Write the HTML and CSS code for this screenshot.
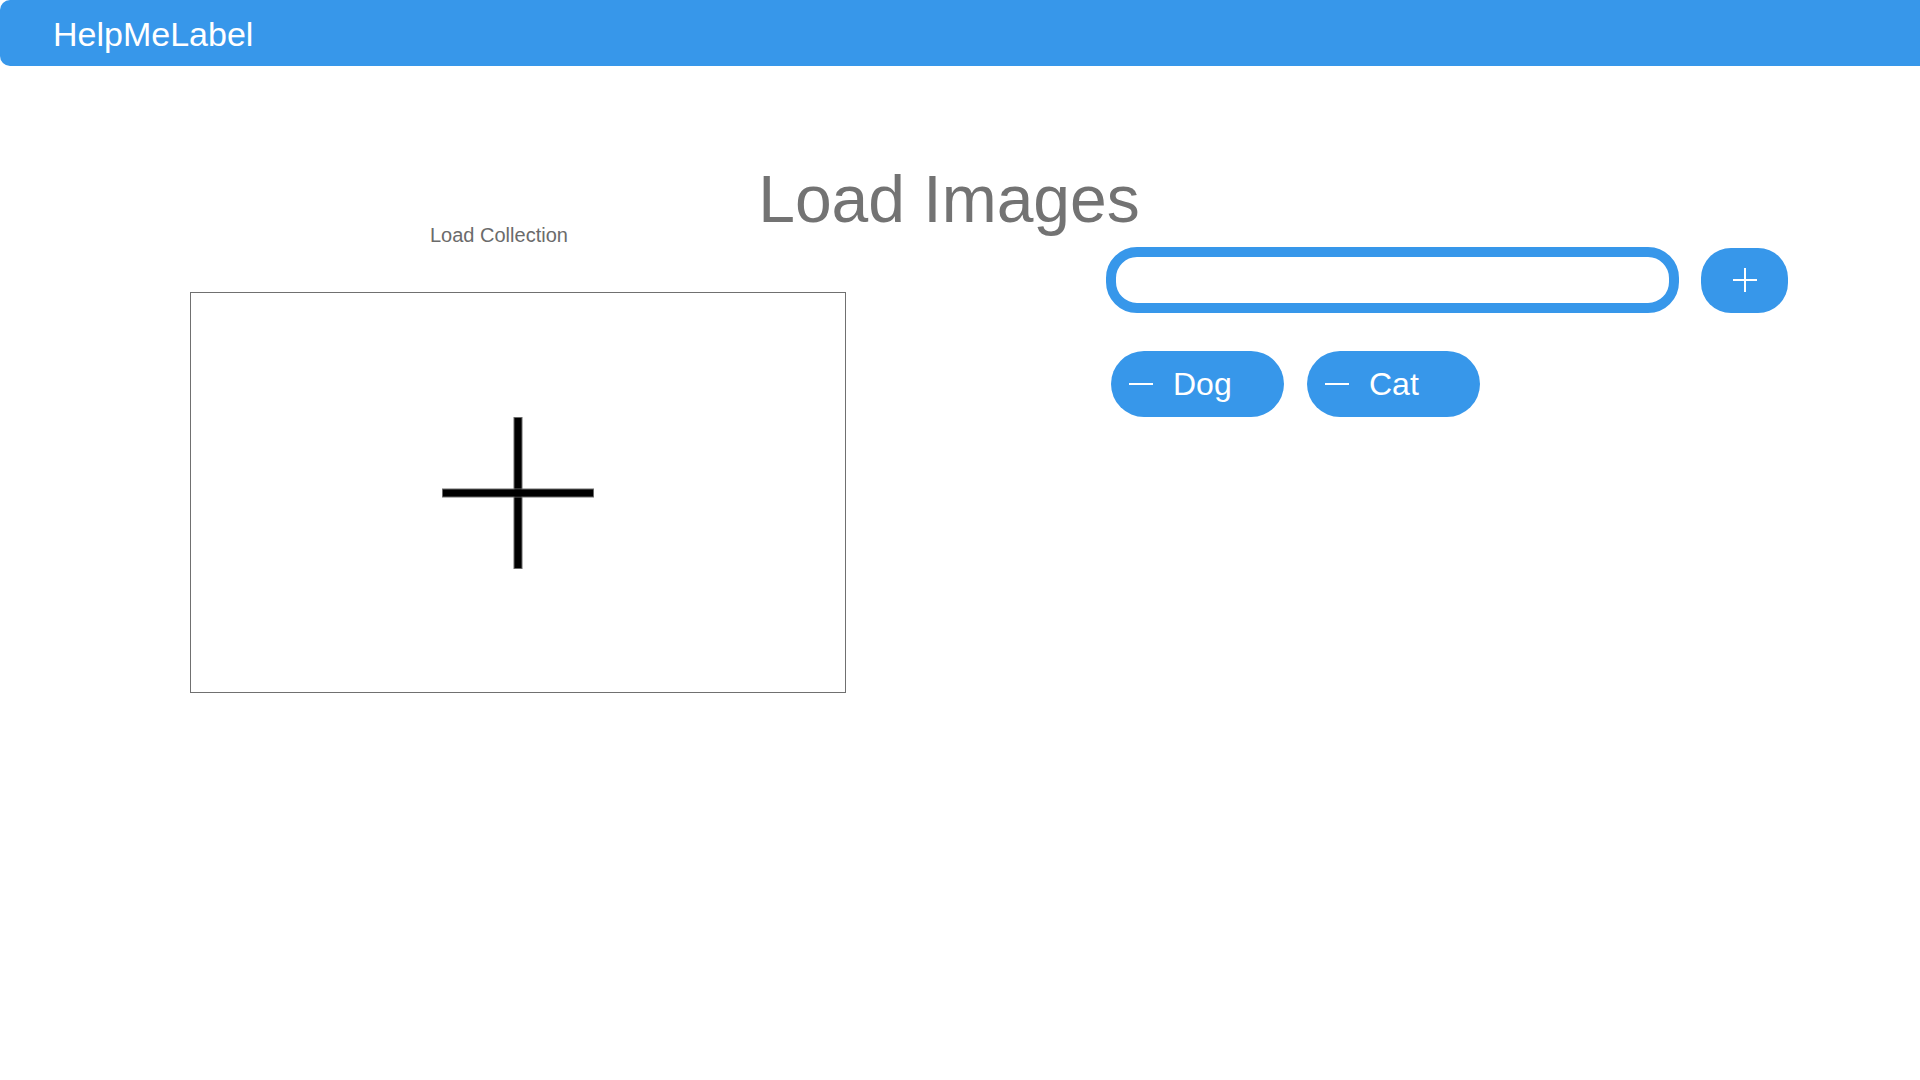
FILE: index.html
```html
<!DOCTYPE html>
<html lang="en">
<head>
<meta charset="utf-8">
<title>HelpMeLabel</title>
<link rel="stylesheet" href="styles.css">
</head>
<body>
<header class="topbar">
  <span class="brand">HelpMeLabel</span>
</header>
<main class="page">
  <h1 class="title">Load Images</h1>
  <div class="columns">
    <section class="collection">
      <div class="collection-label">Load Collection</div>
      <div class="dropzone">
        <svg class="cross" width="152" height="152" viewBox="0 0 152 152" aria-hidden="true">
          <rect x="72" y="0.5" width="8" height="151" fill="#000" stroke="#6a6a6a" stroke-width="1"/>
          <rect x="0.5" y="72" width="151" height="8" fill="#000" stroke="#6a6a6a" stroke-width="1"/>
          <rect x="72.5" y="72.5" width="7" height="7" fill="#000"/>
        </svg>
      </div>
    </section>
    <section class="labels">
      <div class="add-row">
        <input class="label-input" type="text" aria-label="New label">
        <button class="add-btn" type="button" aria-label="Add label">
          <svg width="24" height="24" viewBox="0 0 24 24" aria-hidden="true">
            <path d="M0 12H24M12 0V24" stroke="#fff" stroke-width="2" fill="none"/>
          </svg>
        </button>
      </div>
      <div class="chips">
        <button class="chip" type="button"><span class="chip-minus"></span><span class="chip-text">Dog</span></button>
        <button class="chip" type="button"><span class="chip-minus"></span><span class="chip-text">Cat</span></button>
      </div>
    </section>
  </div>
</main>
</body>
</html>
```

FILE: styles.css
```css
* {
  box-sizing: border-box;
}

html, body {
  margin: 0;
  padding: 0;
  background: #ffffff;
}

body {
  font-family: "Liberation Sans", Arial, Helvetica, sans-serif;
  width: 1920px;
  height: 1080px;
  overflow: hidden;
}

.topbar {
  height: 66px;
  background: #3797ea;
  border-radius: 10px 0 0 10px;
  display: flex;
  align-items: center;
  padding-left: 53px;
  padding-top: 2px;
}

.brand {
  color: #ffffff;
  font-size: 34px;
  line-height: 1;
}

.page {
  padding-top: 108px;
}

.title {
  margin: 0;
  font-weight: normal;
  font-size: 66px;
  line-height: 50px;
  color: #737373;
  text-align: center;
  padding-right: 22px;
}

.columns {
  display: flex;
  align-items: flex-start;
  padding-left: 190px;
  gap: 260px;
}

.collection {
  width: 656px;
  display: flex;
  flex-direction: column;
}

.collection-label {
  margin-top: 1px;
  margin-left: 240px;
  font-size: 20px;
  line-height: 20px;
  color: #6b6b6b;
}

.dropzone {
  margin-top: 47px;
  width: 656px;
  height: 401px;
  border: 1px solid #707070;
  display: flex;
  align-items: center;
  justify-content: center;
}

.cross {
  display: block;
}

.labels {
  padding-top: 23px;
  width: 682px;
}

.add-row {
  display: flex;
  gap: 22px;
  align-items: center;
}

.label-input {
  width: 573px;
  height: 66px;
  border: 10px solid #3797ea;
  border-radius: 31px;
  outline: none;
  background: #ffffff;
  padding: 0 20px;
  font-family: inherit;
  font-size: 24px;
}

.add-btn {
  width: 87px;
  height: 65px;
  border: none;
  border-radius: 30px;
  background: #3797ea;
  display: flex;
  align-items: center;
  justify-content: center;
  padding: 0;
  cursor: pointer;
}

.add-btn svg {
  display: block;
}

.chips {
  display: flex;
  gap: 23px;
  margin-top: 38px;
  margin-left: 5px;
}

.chip {
  width: 173px;
  height: 66px;
  border: none;
  border-radius: 33px;
  background: #3797ea;
  display: flex;
  align-items: center;
  gap: 20px;
  padding: 0 0 0 18px;
  cursor: pointer;
  font-family: inherit;
}

.chip-minus {
  display: block;
  width: 24px;
  height: 2px;
  background: #ffffff;
}

.chip-text {
  color: #ffffff;
  font-size: 32px;
  line-height: 1;
}
```
